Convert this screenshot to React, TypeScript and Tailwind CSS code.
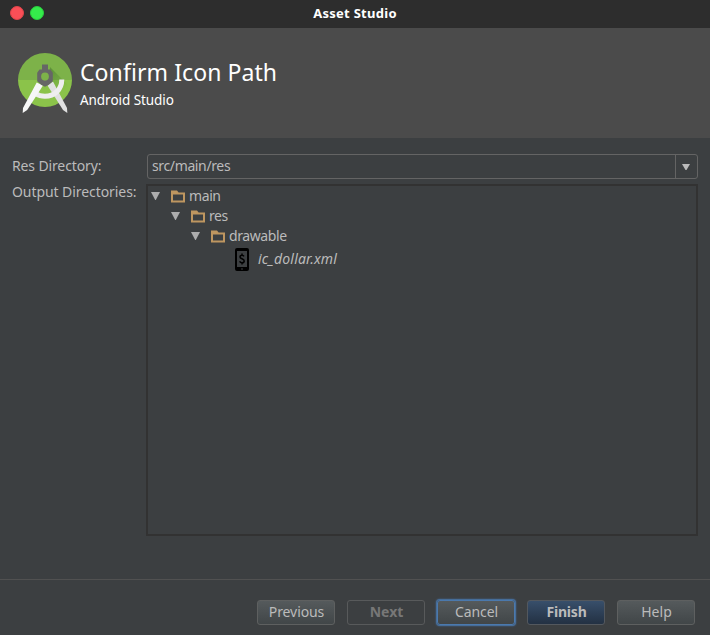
import React from 'react';

const Folder = () => (
  <svg className="block h-[13px] w-[14px] shrink-0" viewBox="0 0 14 13">
    <path d="M0 .5h6l1.600 2H14V12.500H0zM2 4.500v6h10v-6z" fill="#be9660" fillRule="evenodd" />
  </svg>
);

const Caret = () => (
  <svg className="block h-2 w-[9px] shrink-0" viewBox="0 0 9 8">
    <path d="M0 0h9L4.800 8h-.6z" fill="#adadad" />
  </svg>
);

const DeviceIcon = () => (
  <svg className="block h-[23px] w-[14px] shrink-0" viewBox="0 0 14 23">
    <path
      d="M2 0h10a2 2 0 0 1 2 2v19a2 2 0 0 1-2 2H2a2 2 0 0 1-2-2V2a2 2 0 0 1 2-2zM2 3v16h10V3zM6 20.500v1h2v-1z"
      fill="#000"
      fillRule="evenodd"
    />
    <path
      d="M9 8.400C8.600 7.600 7.900 7.200 7 7.200c-1.200 0-2 .7-2 1.700C5 11.300 9.200 10.300 9.200 13c0 1.100-.9 1.800-2.200 1.800-1.100 0-2-.5-2.300-1.500M7 5.500v1.700M7 14.800v1.700"
      fill="none"
      stroke="#000"
      strokeWidth="1.500"
    />
  </svg>
);

const Logo = () => (
  <svg className="block h-[64px] w-[56px] shrink-0" viewBox="0 0 56 64">
    <defs>
      <clipPath id="disc">
        <circle cx="28" cy="29" r="27" />
      </clipPath>
      <linearGradient id="shade" gradientUnits="userSpaceOnUse" x1="32" y1="20" x2="48" y2="38">
        <stop offset="0" stopColor="#33691e" stopOpacity=".4" />
        <stop offset="1" stopColor="#33691e" stopOpacity="0" />
      </linearGradient>
    </defs>
    <g clipPath="url(#disc)">
      <path d="M0 0h56v29H0z" fill="#7db249" />
      <path d="M0 29h56v30H0z" fill="#8bc34a" />
      <path d="M33 16l26 26v16H46L32 33z" fill="url(#shade)" />
    </g>
    <path d="M36 30.500L50 57l.3 5-4.300-3L30.500 34.500z" fill="#e0e0e0" />
    <path d="M44.800 28.500C44.800 38.500 37.500 45.300 28 45.300c-3.700 0-6.800-1-9.500-2.800" fill="none" stroke="#eeeeee" strokeWidth="5" />
    <path d="M19.700 31.500L6 57l-.3 5 4.500-3L26 34.500z" fill="#f7f7f7" />
    <path
      d="M25 13.500h6V18.500h2.500l2.300 3.200v8.600L31.500 34 28 35.800 24.500 34l-4.300-3.700v-8.600l2.300-3.200H25zM28 21.600a3.900 3.900 0 1 0 0 7.800 3.900 3.900 0 0 0 0-7.800z"
      fill="#666"
      fillRule="evenodd"
    />
  </svg>
);

const buttonBase =
  'flex h-[25px] w-[78px] items-center justify-center rounded-[3px] border pb-px pl-px text-[14px]';

export default function App() {
  return (
    <div className="flex h-[635px] w-[710px] flex-col overflow-hidden bg-[#3c3f41] font-['Noto_Sans',sans-serif] text-[14px] leading-5 text-[#bbbbbb]">
      <div className="grid h-7 shrink-0 grid-cols-[1fr_auto_1fr] items-center bg-[#2d2d2d]">
        <div className="flex gap-1.5 pb-0.5 pl-[10px]">
          <span className="size-[14px] rounded-full border border-[#e0444a] bg-[#fa4f57]" />
          <span className="size-[14px] rounded-full border border-[#28ce3d] bg-[#35eb4b]" />
        </div>
        <h1 className="pb-[3px] text-[13px] font-bold tracking-[0.270px] text-white">Asset Studio</h1>
        <span />
      </div>

      <header className="flex h-[110px] shrink-0 bg-[#4b4b4b] pl-[17px] pt-[23px] text-white">
        <Logo />
        <div className="pl-[7px] pt-[5px]">
          <h2 className="text-[23px] leading-[32px] tracking-[0.080px]">Confirm Icon Path</h2>
          <p className="pt-[2px] text-[13.500px] leading-5 tracking-[-0.050px]">Android Studio</p>
        </div>
      </header>

      <main className="flex h-[442px] shrink-0 border-b border-[#515151] pl-3 pr-3 pt-4">
        <div className="w-[134px] shrink-0 whitespace-nowrap">
          <p className="h-[26px] pt-[2px] tracking-[-0.130px]">Res Directory:</p>
          <p className="pt-[2px] tracking-[-0.070px]">Output Directories:</p>
        </div>
        <div className="w-[552px]">
          <div className="ml-px flex h-[25px] w-[551px] rounded-[3px] border border-[#646464]">
            <span className="flex-1 pl-1 pt-px tracking-[-0.370px]">src/main/res</span>
            <span className="flex w-[22px] items-center justify-center border-l border-[#646464] pr-px">
              <svg className="h-[6px] w-[8px]" viewBox="0 0 8 6">
                <path d="M0 0h8L4.500 6h-1z" fill="#bbb" />
              </svg>
            </span>
          </div>
          <div className="mt-[5px] h-[352px] border-2 border-[#323232] tracking-[-0.400px]">
            <div className="flex h-5 items-center pl-[3px]">
              <Caret />
              <span className="pl-[11px]"><Folder /></span>
              <span className="pl-1">main</span>
            </div>
            <div className="flex h-5 items-center pl-[23px]">
              <Caret />
              <span className="pl-[11px]"><Folder /></span>
              <span className="pl-1">res</span>
            </div>
            <div className="flex h-5 items-center pl-[43px]">
              <Caret />
              <span className="pl-[11px]"><Folder /></span>
              <span className="pl-1">drawable</span>
            </div>
            <div className="flex h-[26px] items-center pl-[87px]">
              <DeviceIcon />
              <span className="pl-[9px] italic tracking-[0.180px]">ic_dollar.xml</span>
            </div>
          </div>
        </div>
      </main>

      <footer className="flex flex-1 justify-end gap-3 pr-[15px] pt-5">
        <button className={`${buttonBase} border-[#5e6060] bg-linear-to-b from-[#555a5c] to-[#414648] tracking-[-0.100px]`}>Previous</button>
        <button className={`${buttonBase} border-[#585a5b] font-bold text-[#777777]`}>Next</button>
        <button className={`${buttonBase} border-[#4b79ad] bg-linear-to-b from-[#555a5c] to-[#414648] shadow-[0_0_0_1px_#466d99,0_0_2px_1px_#466d99] tracking-[-0.100px]`}>Cancel</button>
        <button className={`${buttonBase} border-[#53585e] bg-linear-to-b from-[#384f6b] to-[#233143] font-bold tracking-[-0.200px]`}>Finish</button>
        <button className={`${buttonBase} border-[#5e6060] bg-linear-to-b from-[#555a5c] to-[#414648]`}>Help</button>
      </footer>
    </div>
  );
}
